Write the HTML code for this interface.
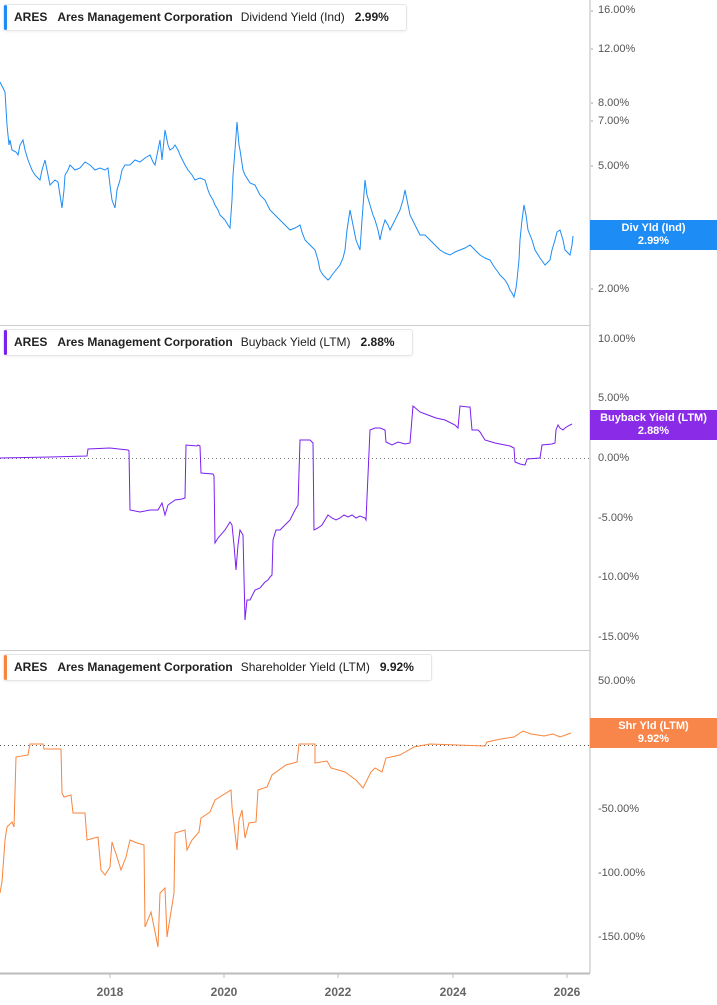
<!DOCTYPE html>
<html><head><meta charset="utf-8"><style>
html,body{margin:0;padding:0;background:#fff;width:717px;height:1005px;overflow:hidden;font-family:"Liberation Sans",sans-serif}
.lg{position:absolute;left:3px;height:25px;background:#fff;border:1px solid #e6e6e6;border-radius:3px;font-size:12px;font-weight:bold;color:#222;line-height:25px;white-space:nowrap;box-shadow:0 1px 2px rgba(0,0,0,.06)}
.lg b{position:absolute;left:0;top:0;bottom:0;width:3px;border-radius:2px}
.lg span{margin-left:10px}
.lg i{font-style:normal;font-weight:normal;margin-left:8px}
.badge{position:absolute;left:590px;width:127px;color:#fff;font-size:11px;font-weight:bold;text-align:center;line-height:13px;padding-top:2px}
.t{position:absolute;left:598px;font-size:11px;color:#555;line-height:12px}
.x{position:absolute;top:985px;font-size:12px;font-weight:bold;color:#666;width:40px;margin-left:-20px;text-align:center}
</style></head><body>
<svg width="717" height="1005" style="position:absolute;left:0;top:0">
<line x1="590" y1="0" x2="590" y2="973" stroke="#bbb"/>
<line x1="0" y1="325.5" x2="590" y2="325.5" stroke="#ccc"/>
<line x1="0" y1="650.5" x2="590" y2="650.5" stroke="#ccc"/>
<line x1="0" y1="973.5" x2="590" y2="973.5" stroke="#bbb" stroke-width="2"/>
<g stroke="#bbb"><line x1="110" y1="973" x2="110" y2="978"/><line x1="224" y1="973" x2="224" y2="978"/><line x1="338" y1="973" x2="338" y2="978"/><line x1="453" y1="973" x2="453" y2="978"/><line x1="567" y1="973" x2="567" y2="978"/></g>
<line x1="0" y1="458.5" x2="590" y2="458.5" stroke="#777" stroke-dasharray="1,3"/>
<line x1="0" y1="745.5" x2="590" y2="745.5" stroke="#555" stroke-dasharray="1,3"/>
<polyline fill="none" stroke="#1e8cf5" stroke-width="1" points="0,82 3,88 5,92 7,125 9,145 10,140 12,150 16,152 18,155 20,145 23,140 25,150 28,160 32,170 35,175 38,178 40,180 42,170 45,160 48,175 50,185 55,180 58,182 60,195 62,208 64,190 65,175 68,170 70,165 75,170 80,168 85,162 90,165 95,170 100,168 105,170 108,168 110,185 112,200 115,208 117,190 120,180 122,170 125,165 130,165 135,160 140,162 145,158 150,155 153,162 155,165 158,150 160,140 162,160 165,130 168,145 170,150 173,148 175,145 178,150 180,155 185,165 188,170 192,175 195,180 200,178 205,180 208,190 210,195 213,200 215,205 218,210 220,215 223,218 225,220 228,225 230,228 232,200 233,175 235,150 237,122 239,145 240,150 243,170 245,175 250,183 255,185 260,195 265,200 270,210 275,215 280,220 285,225 290,230 295,228 300,225 302,232 305,240 310,245 315,250 318,260 320,270 323,275 326,278 328,280 330,278 332,275 336,270 340,265 343,258 345,250 347,230 350,210 353,225 356,240 360,250 362,220 365,180 367,195 370,205 373,215 375,220 378,230 380,240 382,230 385,220 388,225 390,230 395,220 400,210 403,200 405,190 407,200 410,215 415,225 420,235 425,235 430,240 435,245 440,250 445,253 450,255 455,252 460,250 465,248 470,245 475,250 480,255 485,258 490,260 493,265 495,268 498,272 500,275 503,278 505,280 508,285 510,290 512,293 514,297 516,288 517,280 519,260 520,240 522,220 524,205 526,215 528,230 532,240 535,250 540,258 545,265 548,262 550,260 552,250 555,240 557,232 560,230 563,240 565,250 568,253 570,255 572,245 573,236"/>
<polyline fill="none" stroke="#7a1fef" stroke-width="1" points="0,458 50,457 87,456 88,449 110,448 128,450 129,451 130,510 140,512 150,510 158,510 162,503 165,515 168,505 175,500 182,499 185,498 186,445 197,446 198,445 200,446 201,473 213,474 214,476 215,543 218,538 225,530 230,522 232,525 234,545 236,570 238,545 240,530 243,535 245,620 247,600 250,600 255,590 260,588 265,582 268,580 270,577 272,575 273,540 276,530 280,530 285,525 290,520 295,510 298,505 300,440 310,440 313,443 314,530 318,528 322,525 328,515 332,518 336,520 340,518 344,515 348,517 352,515 356,518 360,516 365,518 366,520 370,430 375,428 380,428 385,430 386,442 392,445 398,442 405,444 410,443 413,406 420,412 428,415 436,418 445,420 455,425 458,428 460,406 468,407 470,407 472,430 478,430 480,432 485,440 495,443 505,445 510,446 514,448 515,462 520,464 525,465 527,459 540,458 542,445 552,444 555,443 556,430 558,425 560,428 563,430 565,428 568,426 572,424"/>
<polyline fill="none" stroke="#f8853c" stroke-width="1" points="0,893 2,882 5,840 7,827 12,822 14,827 16,757 28,755 30,744 43,744 44,749 61,749 62,793 64,797 71,795 73,813 85,813 87,840 98,837 101,870 105,875 110,867 112,842 117,857 121,870 126,857 130,840 137,843 144,845 145,927 151,912 158,947 160,893 165,888 167,937 174,893 175,833 185,830 187,850 192,840 199,832 201,818 210,812 215,800 231,790 232,807 237,850 239,820 242,810 245,838 249,823 256,822 258,790 267,787 272,775 286,765 297,762 299,744 315,744 315,763 327,761 331,768 345,772 356,780 363,788 371,772 375,768 382,772 386,758 400,755 414,747 430,744 457,745 485,746 487,742 501,739 514,737 523,731 531,734 544,736 553,734 560,737 571,733"/>
<g fill="#999"><circle cx="592" cy="11" r=".8"/><circle cx="592" cy="49" r=".8"/><circle cx="592" cy="103" r=".8"/><circle cx="592" cy="121" r=".8"/><circle cx="592" cy="166" r=".8"/><circle cx="592" cy="289" r=".8"/></g>
</svg>
<div class="lg" style="top:4px;width:402px"><b style="background:#1e8cf5"></b><span>ARES</span><span>Ares Management Corporation</span><i>Dividend Yield (Ind)</i><span>2.99%</span></div>
<div class="lg" style="top:329px;width:408px"><b style="background:#7a1fef"></b><span>ARES</span><span>Ares Management Corporation</span><i>Buyback Yield (LTM)</i><span>2.88%</span></div>
<div class="lg" style="top:654px;width:427px"><b style="background:#f8853c"></b><span>ARES</span><span>Ares Management Corporation</span><i>Shareholder Yield (LTM)</i><span>9.92%</span></div>
<div class="t" style="top:4px">16.00%</div>
<div class="t" style="top:43px">12.00%</div>
<div class="t" style="top:97px">8.00%</div>
<div class="t" style="top:115px">7.00%</div>
<div class="t" style="top:160px">5.00%</div>
<div class="t" style="top:283px">2.00%</div>
<div class="t" style="top:333px">10.00%</div>
<div class="t" style="top:392px">5.00%</div>
<div class="t" style="top:452px">0.00%</div>
<div class="t" style="top:512px">-5.00%</div>
<div class="t" style="top:571px">-10.00%</div>
<div class="t" style="top:631px">-15.00%</div>
<div class="t" style="top:675px">50.00%</div>
<div class="t" style="top:803px">-50.00%</div>
<div class="t" style="top:867px">-100.00%</div>
<div class="t" style="top:931px">-150.00%</div>
<div class="badge" style="top:220px;height:28px;background:#1e8cf5">Div Yld (Ind)<br>2.99%</div>
<div class="badge" style="top:410px;height:28px;background:#8a2be8">Buyback Yield (LTM)<br>2.88%</div>
<div class="badge" style="top:718px;height:28px;background:#f8864a">Shr Yld (LTM)<br>9.92%</div>
<div class="x" style="left:110px">2018</div>
<div class="x" style="left:224px">2020</div>
<div class="x" style="left:338px">2022</div>
<div class="x" style="left:453px">2024</div>
<div class="x" style="left:567px">2026</div>
</body></html>
